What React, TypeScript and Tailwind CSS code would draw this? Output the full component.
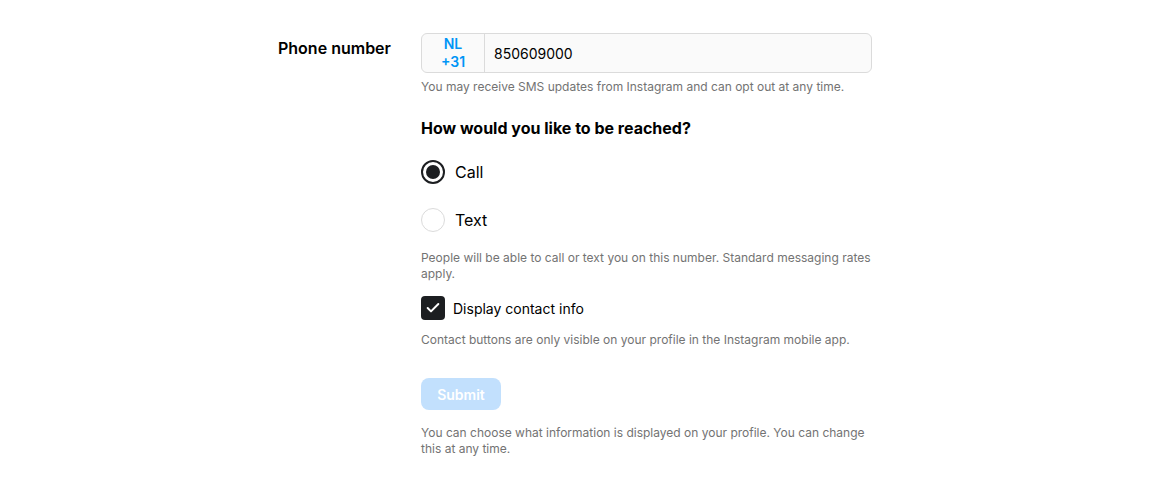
import { Check } from "lucide-react";

export default function App() {
  return (
    <div
      className="flex min-h-[495px] w-full justify-center bg-white pt-[33px] text-black"
      style={{ fontFamily: "Inter, 'Liberation Sans', sans-serif" }}
    >
      <div className="mr-[5px] flex w-[594px]">
        {/* Label column */}
        <div className="w-[143px] shrink-0 pt-[3px]">
          <span className="text-[16px] font-semibold leading-[20px]">Phone number</span>
        </div>

        {/* Field column */}
        <div className="flex w-[451px] flex-col">
          <div className="flex h-[40px] overflow-hidden rounded-[6px] border border-[#dbdbdb] bg-[#fafafa]">
            <div className="flex w-[63px] flex-col items-center justify-center border-r border-[#dbdbdb] text-[14px] font-semibold leading-[18px] text-[#0095f6]">
              <span>NL</span>
              <span>+31</span>
            </div>
            <div className="flex items-center pl-[9px] text-[14px]">850609000</div>
          </div>
          <p className="mt-[6px] text-[12px] leading-[16px] text-[#737373]">
            You may receive SMS updates from Instagram and can opt out at any time.
          </p>

          <h2 className="mt-[23px] text-[16px] font-bold leading-[20px]">
            How would you like to be reached?
          </h2>

          <label className="mt-[22px] flex h-[24px] items-center gap-[10px]">
            <span className="flex h-[24px] w-[24px] items-center justify-center rounded-full border-2 border-[#1c1e21]">
              <span className="h-[14px] w-[14px] rounded-full bg-[#1c1e21]" />
            </span>
            <span className="text-[16px]">Call</span>
          </label>

          <label className="mt-[24px] flex h-[24px] items-center gap-[10px]">
            <span className="h-[24px] w-[24px] rounded-full border border-[#dbdbdb]" />
            <span className="text-[16px]">Text</span>
          </label>

          <p className="mt-[18px] text-[12px] leading-[16px] text-[#737373]">
            People will be able to call or text you on this number. Standard messaging rates apply.
          </p>

          <label className="mt-[14px] flex h-[24px] items-center gap-[8px]">
            <span className="flex h-[24px] w-[24px] items-center justify-center rounded-[4px] bg-[#1c1e21]">
              <Check className="h-[16px] w-[16px] text-white" strokeWidth={3} />
            </span>
            <span className="text-[14px]">Display contact info</span>
          </label>

          <p className="mt-[12px] text-[12px] leading-[16px] text-[#737373]">
            Contact buttons are only visible on your profile in the Instagram mobile app.
          </p>

          <button
            disabled
            className="mt-[30px] h-[32px] w-[80px] rounded-[8px] bg-[#c2e0fd] text-[14px] font-semibold text-white"
          >
            Submit
          </button>

          <p className="mt-[15px] text-[12px] leading-[16px] text-[#737373]">
            You can choose what information is displayed on your profile. You can change this at any time.
          </p>
        </div>
      </div>
    </div>
  );
}
